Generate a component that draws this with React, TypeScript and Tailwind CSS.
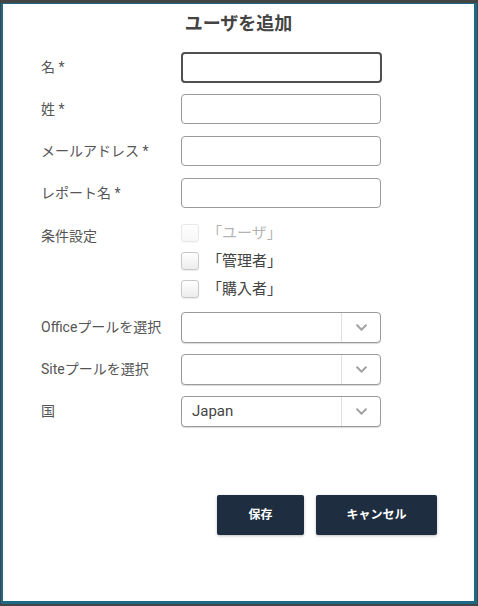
import { FaChevronDown } from "react-icons/fa";

const font = { fontFamily: 'Roboto, "Noto Sans CJK JP", sans-serif' };

const TextRow = ({ label, focused }: { label: string; focused?: boolean }) => (
  <div className="flex items-center h-[30px]">
    <label className="w-[140px] text-[14px] text-[#555]">{label}</label>
    {focused ? (
      <input className="w-[201px] h-[31px] rounded-[4px] border-2 border-[#505050] outline-none" />
    ) : (
      <input className="w-[200px] h-[30px] rounded-[4px] border border-[#9a9a9a] outline-none" />
    )}
  </div>
);

const SelectRow = ({ label, value }: { label: string; value?: string }) => (
  <div className="flex items-center h-[31px]">
    <label className="w-[140px] text-[14px] text-[#555]">{label}</label>
    <div className="flex w-[200px] h-[31px] rounded-[4px] border border-[#9a9a9a] shadow-[0_1px_1px_rgba(0,0,0,0.15)] bg-white">
      <div className="flex-1 flex items-center pl-[10px] text-[15px] text-[#444]">{value}</div>
      <div className="w-[39px] flex items-center justify-center border-l border-[#e0e0e0]">
        <FaChevronDown size={13} className="text-[#a3a3a3]" />
      </div>
    </div>
  </div>
);

const Check = ({ label, disabled }: { label: string; disabled?: boolean }) => (
  <div className={"flex items-center h-[28px] gap-[8px] " + (disabled ? "opacity-40" : "")}>
    <span className="w-[18px] h-[18px] rounded-[3px] border border-[#c8c8c8] bg-gradient-to-b from-white to-[#ececec] shadow-[0_1px_1px_rgba(0,0,0,0.08)]" />
    <span className="text-[15px] text-[#444]">{label}</span>
  </div>
);

export default function App() {
  return (
    <div className="w-[478px] h-[606px] bg-[#454545] pt-[3px] pl-px pr-px pb-[2px]" style={font}>
      <div className="h-full flex flex-col bg-white border-l-2 border-t border-r-[3px] border-b-[3px] border-[#1b6b86]">
        <h1 className="pt-[8px] text-center text-[18px] leading-[24px] font-bold text-[#444]">ユーザを追加</h1>
        <div className="pl-[38px] mt-[16px] flex flex-col">
          <div className="flex flex-col gap-[12px]">
            <TextRow label="名 *" focused />
            <TextRow label="姓 *" />
            <TextRow label="メールアドレス *" />
            <TextRow label="レポート名 *" />
          </div>
          <div className="flex mt-[11px]">
            <label className="w-[140px] text-[14px] leading-[20px] text-[#555] mt-[7px]">条件設定</label>
            <div className="flex flex-col">
              <Check label="「ユーザ」" disabled />
              <Check label="「管理者」" />
              <Check label="「購入者」" />
            </div>
          </div>
          <div className="flex flex-col gap-[11px] mt-[9px]">
            <SelectRow label="Officeプールを選択" />
            <SelectRow label="Siteプールを選択" />
            <SelectRow label="国" value="Japan" />
          </div>
        </div>
        <div className="flex justify-end gap-[12px] pr-[37px] mt-[68px]">
          <button className="w-[87px] h-[40px] rounded-[2px] bg-[#1e2d40] text-white text-[12px] font-bold shadow-[0_1px_3px_rgba(0,0,0,0.25)]">保存</button>
          <button className="w-[121px] h-[40px] rounded-[2px] bg-[#1e2d40] text-white text-[12px] font-bold shadow-[0_1px_3px_rgba(0,0,0,0.25)]">キャンセル</button>
        </div>
      </div>
    </div>
  );
}
